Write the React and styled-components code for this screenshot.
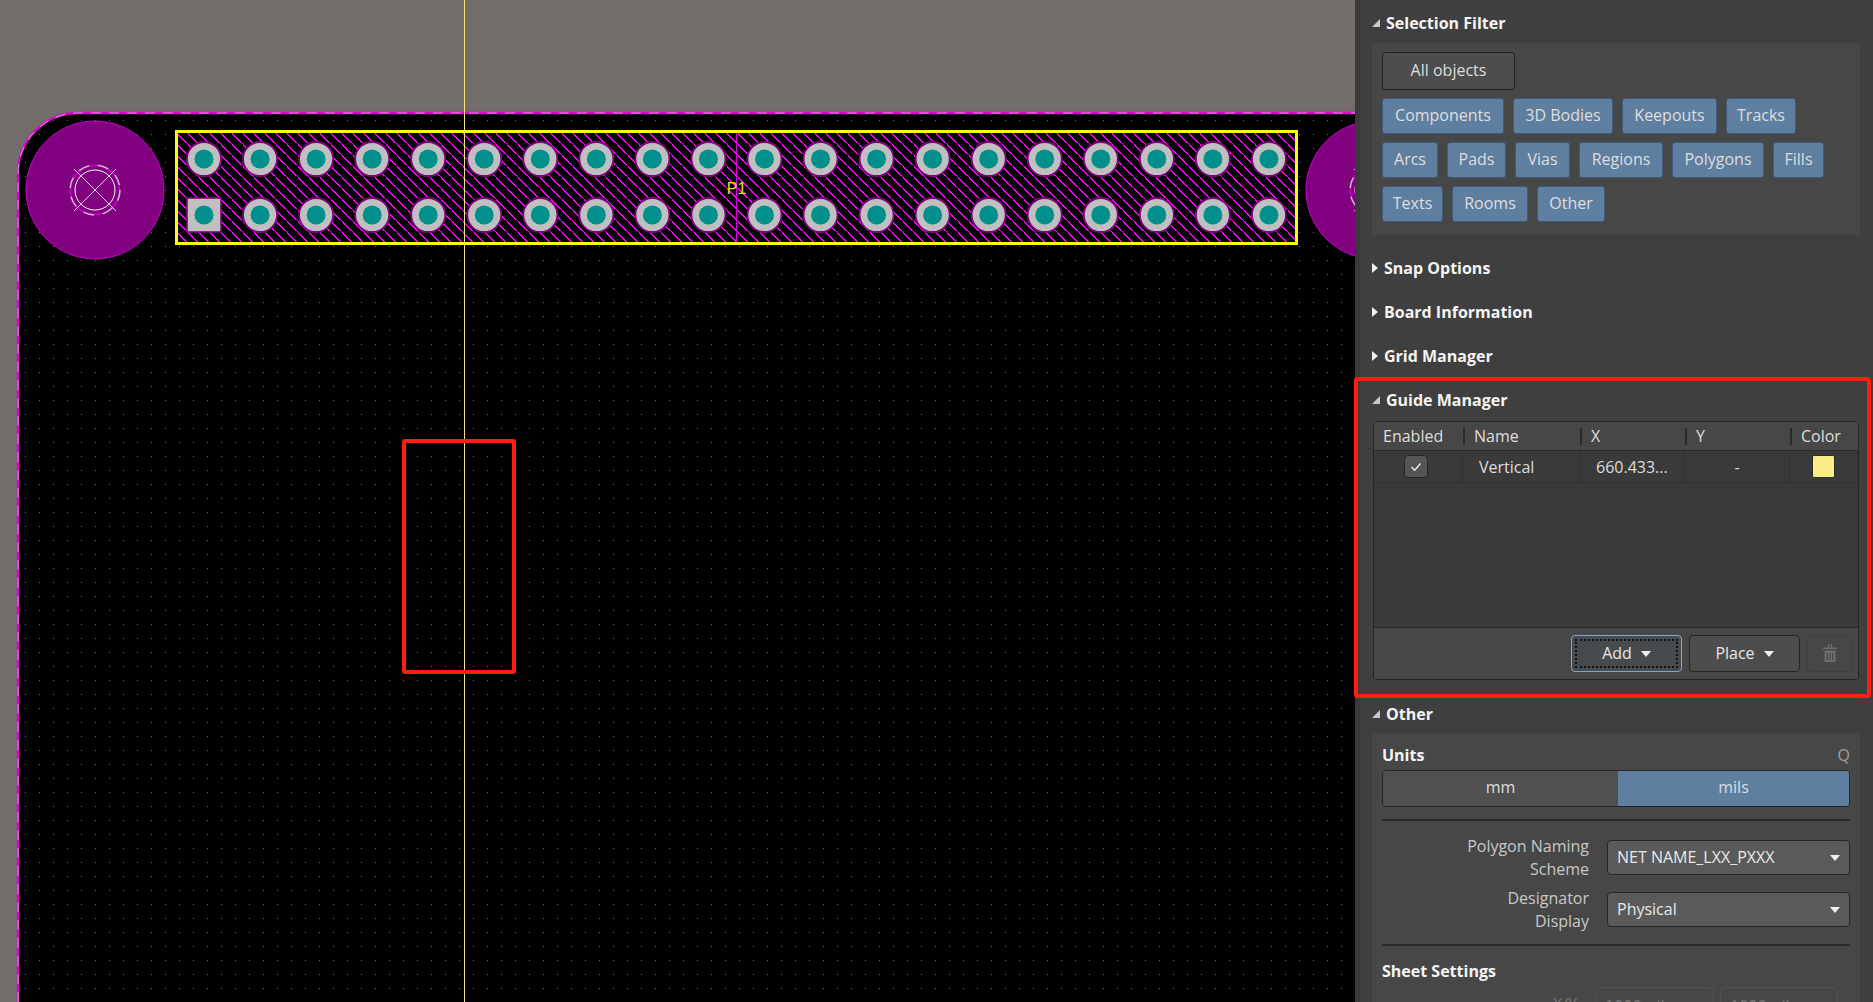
import React from "react";
import styled, { createGlobalStyle } from "styled-components";

const FONT = `"Open Sans", "Noto Sans", "Liberation Sans", sans-serif`;

const chipRows = [
  [["Components", 122], ["3D Bodies", 100], ["Keepouts", 95], ["Tracks", 70]],
  [["Arcs", 56], ["Pads", 59], ["Vias", 55], ["Regions", 84], ["Polygons", 92], ["Fills", 51]],
  [["Texts", 61], ["Rooms", 76], ["Other", 68]],
];

const padXs = Array.from({ length: 20 }, (_, i) => 204 + i * 56.05);

const MountingHole = ({ cx, cy }) => (
  <g>
    <circle cx={cx} cy={cy} r="69" fill="#800080" stroke="#d000d0" strokeWidth="1" />
    <circle cx={cx} cy={cy} r="24.5" fill="none" stroke="#d000d0" strokeWidth="1.5" />
    <circle cx={cx} cy={cy} r="25" fill="none" stroke="#c0c0c0" strokeWidth="1.5" strokeDasharray="11 9" />
    <circle cx={cx} cy={cy} r="20" fill="none" stroke="#fff" strokeWidth="1" />
    <path d={`M${cx - 21} ${cy - 21}L${cx + 21} ${cy + 21}M${cx + 21} ${cy - 21}L${cx - 21} ${cy + 21}`} stroke="#fff" strokeWidth="0.8" />
  </g>
);

const Pad = ({ x, y, square }) => (
  <g>
    {square ? (
      <rect x={x - 17} y={y - 17} width="34" height="34" fill="#c0c0c0" stroke="#800080" strokeWidth="1.6" />
    ) : (
      <circle cx={x} cy={y} r="17" fill="#c0c0c0" stroke="#800080" strokeWidth="1.8" />
    )}
    <circle cx={x} cy={y} r="9.5" fill="#008f8a" />
  </g>
);

const BoardDrawing = () => (
  <BoardSvg width="1355" height="1002" viewBox="0 0 1355 1002">
    <defs>
      <pattern id="grid" width="14" height="14" patternUnits="userSpaceOnUse" x="25" y="120">
        <rect width="1" height="1" fill="#6c6c6c" />
      </pattern>
      <pattern id="hatch" width="11" height="11" patternUnits="userSpaceOnUse">
        <path d="M-1 -1L12 12M-6.5 4.5L6.5 17.5M4.5 -6.5L17.5 6.5" stroke="#ff00ff" strokeWidth="1.4" shapeRendering="crispEdges" />
      </pattern>
    </defs>
    <path d="M18 1002V173A60 60 0 0 1 78 113H1355V1002Z" fill="#000" />
    <path d="M18 1002V173A60 60 0 0 1 78 113H1355V1002Z" fill="url(#grid)" />
    <path d="M18 1002V173A60 60 0 0 1 78 113H1355" fill="none" stroke="#e000d0" strokeWidth="2.4" />
    <path d="M18 1002V173A60 60 0 0 1 78 113H1355" fill="none" stroke="#d8a0d8" strokeWidth="1" strokeDasharray="10 8" />
    <MountingHole cx={95} cy={190} />
    <MountingHole cx={1375} cy={190} />
    <rect x="176.5" y="131.5" width="1120" height="112" fill="#000" />
    <rect x="176.5" y="131.5" width="1120" height="112" fill="url(#hatch)" />
    <path d="M736.5 131V243" stroke="#e000e0" strokeWidth="1" />
    {padXs.map((x) => (
      <Pad key={`t${x}`} x={x} y={159} />
    ))}
    {padXs.map((x, i) => (
      <Pad key={`b${x}`} x={x} y={215} square={i === 0} />
    ))}
    <rect x="176.5" y="131.5" width="1120" height="112" fill="none" stroke="#ffff00" strokeWidth="3" />
    <text x="736.5" y="194" textAnchor="middle" fontFamily="Liberation Sans, sans-serif" fontSize="16" fill="#e6e600">P1</text>
    <path d="M464.5 0V1002" stroke="#f5e77e" strokeWidth="1" />
  </BoardSvg>
);

const TrashIcon = () => (
  <svg width="14" height="19" viewBox="0 0 14 19">
    <path d="M0 3.5H14V5H0ZM5 0.5H9V3.5H8V1.5H6V3.5H5Z" fill="#6f6f6f" />
    <path d="M1.5 6.5H12.5V18H1.5Z" fill="#6f6f6f" />
    <path d="M4.3 9V16M7 9V16M9.7 9V16" stroke="#3f3f3f" strokeWidth="1" />
  </svg>
);

const App = () => {
  return (
    <Screen>
      <GlobalStyle />
      <Canvas>
        <BoardDrawing />
        <CanvasMarker />
      </Canvas>
      <Panel>
        <Section>
          <SectionHeader>
            <OpenArrow />
            Selection Filter
          </SectionHeader>
          <FilterCard>
            <AllObjects>All objects</AllObjects>
            {chipRows.map((row) => (
              <ChipRow key={row[0][0]}>
                {row.map(([label, width]) => (
                  <Chip key={label} $width={width}>
                    {label}
                  </Chip>
                ))}
              </ChipRow>
            ))}
          </FilterCard>
        </Section>

        <SectionHeader>
          <ClosedArrow />
          Snap Options
        </SectionHeader>
        <SectionHeader>
          <ClosedArrow />
          Board Information
        </SectionHeader>
        <SectionHeader>
          <ClosedArrow />
          Grid Manager
        </SectionHeader>

        <GuideSection>
          <SectionHeader>
            <OpenArrow />
            Guide Manager
          </SectionHeader>
          <GuideTable>
            <TableHead>
              <HeadCell>Enabled</HeadCell>
              <HeadCell $divider>Name</HeadCell>
              <HeadCell $divider>X</HeadCell>
              <HeadCell $divider>Y</HeadCell>
              <HeadCell $divider>Color</HeadCell>
            </TableHead>
            <TableRow>
              <BodyCell $center>
                <CheckBox>
                  <svg width="12" height="10" viewBox="0 0 12 10">
                    <path d="M1.5 5L4.7 8.2L10.5 1.5" fill="none" stroke="#f0f0f0" strokeWidth="1.3" />
                  </svg>
                </CheckBox>
              </BodyCell>
              <BodyCell $inset={16}>Vertical</BodyCell>
              <BodyCell $inset={16}>660.433...</BodyCell>
              <BodyCell $center>-</BodyCell>
              <BodyCell $center>
                <Swatch />
              </BodyCell>
            </TableRow>
            <TableEmpty />
            <TableFooter>
              <FocusButton>
                <ButtonLabel>Add</ButtonLabel>
                <DropArrow />
              </FocusButton>
              <FooterButton>
                <ButtonLabel>Place</ButtonLabel>
                <DropArrow />
              </FooterButton>
              <TrashButton>
                <TrashIcon />
              </TrashButton>
            </TableFooter>
          </GuideTable>
          <GuideMarker />
        </GuideSection>

        <Section>
          <SectionHeader>
            <OpenArrow />
            Other
          </SectionHeader>
          <OtherCard>
            <UnitsRow>
              <GroupTitle>Units</GroupTitle>
              <Hotkey>Q</Hotkey>
            </UnitsRow>
            <UnitsToggle>
              <UnitOption>mm</UnitOption>
              <UnitOption $active>mils</UnitOption>
            </UnitsToggle>
            <Divider $top={12} $bottom={19} />
            <FieldRow>
              <FieldLabel>
                Polygon Naming
                <br />
                Scheme
              </FieldLabel>
              <Select>
                NET NAME_LXX_PXXX
                <DropArrow />
              </Select>
            </FieldRow>
            <FieldRow>
              <FieldLabel>
                Designator
                <br />
                Display
              </FieldLabel>
              <Select>
                Physical
                <DropArrow />
              </Select>
            </FieldRow>
            <Divider $top={0} $bottom={0} />
            <SheetTitle>Sheet Settings</SheetTitle>
            <SheetRow>
              <SheetLabel>X/Y</SheetLabel>
              <SheetInput>1000mil</SheetInput>
              <SheetInput>1000mil</SheetInput>
            </SheetRow>
          </OtherCard>
        </Section>
      </Panel>
    </Screen>
  );
};
export default App;

const GlobalStyle = createGlobalStyle`
  html, body {
    margin: 0;
    padding: 0;
    background: #3f3f3f;
  }
  * {
    box-sizing: border-box;
  }
`;

const Screen = styled.div`
  width: 1873px;
  height: 1002px;
  overflow: hidden;
  display: grid;
  grid-template-columns: 1355px 518px;
  font-family: ${FONT};
  font-size: 16px;
  color: #dedede;
`;
const Canvas = styled.div`
  position: relative;
  height: 1002px;
  overflow: hidden;
  background-color: #716d6b;
`;
const BoardSvg = styled.svg`
  display: block;
`;
const CanvasMarker = styled.div`
  position: absolute;
  left: 402px;
  top: 439px;
  width: 114px;
  height: 235px;
  border: 4px solid #ff1e12;
  border-radius: 3px;
`;
const Panel = styled.div`
  height: 1002px;
  padding: 1px 0 0 12px;
  background-color: #3f3f3f;
  border-left: 5px solid #3a3a3a;
`;
const Section = styled.div`
  display: flex;
  flex-direction: column;
`;
const GuideSection = styled(Section)`
  position: relative;
`;
const GuideMarker = styled.div`
  position: absolute;
  left: -18px;
  top: -1px;
  width: 517px;
  height: 321px;
  border: 4.5px solid #ff1e12;
  border-radius: 3px;
`;
const SectionHeader = styled.div`
  height: 44px;
  display: flex;
  align-items: center;
  gap: 6px;
  font-size: 16px;
  font-weight: 700;
  color: #f4f4f4;
`;
const OpenArrow = styled.span`
  width: 0;
  height: 0;
  border-left: 8px solid transparent;
  border-bottom: 8px solid #c8c8c8;
`;
const ClosedArrow = styled.span`
  width: 0;
  height: 0;
  border-top: 5px solid transparent;
  border-bottom: 5px solid transparent;
  border-left: 6px solid #f0f0f0;
`;
const FilterCard = styled.div`
  width: 488px;
  height: 192px;
  margin: -2px 0 11px;
  padding: 9px 10px;
  background-color: #474747;
  border-radius: 3px;
`;
const AllObjects = styled.div`
  width: 133px;
  height: 38px;
  margin-bottom: 8px;
  padding-bottom: 2px;
  display: flex;
  align-items: center;
  justify-content: center;
  background-color: #4d4d4d;
  border: 1px solid #222;
  border-radius: 3px;
`;
const ChipRow = styled.div`
  display: flex;
  gap: 9px;
  margin-bottom: 8px;
`;
const Chip = styled.div`
  width: ${(p) => p.$width}px;
  height: 36px;
  padding-bottom: 2px;
  display: flex;
  align-items: center;
  justify-content: center;
  background-color: #5f7fa0;
  border: 1px solid #3e5a78;
  border-radius: 3px;
  white-space: nowrap;
`;
const GuideTable = styled.div`
  width: 486px;
  height: 259px;
  margin: -1px 0 12px 1px;
  display: flex;
  flex-direction: column;
  background-color: #3a3a3a;
  border: 1px solid #262626;
  border-radius: 3px;
`;
const TableHead = styled.div`
  height: 29px;
  display: grid;
  grid-template-columns: 89px 117px 105px 105px 1fr;
  align-items: center;
  background-color: #474747;
  border-bottom: 1px solid #2c2c2c;
`;
const HeadCell = styled.div`
  height: 17px;
  display: flex;
  align-items: center;
  padding-left: 9px;
  padding-bottom: 1px;
  border-left: ${(p) => (p.$divider ? "2px solid #2a2a2a" : "none")};
`;
const TableRow = styled.div`
  height: 32px;
  display: grid;
  grid-template-columns: 89px 117px 105px 105px 1fr;
  border-bottom: 1px solid #333;
`;
const BodyCell = styled.div`
  display: flex;
  align-items: center;
  justify-content: ${(p) => (p.$center ? "center" : "flex-start")};
  padding-left: ${(p) => p.$inset || 0}px;
  border-right: 1px solid #333;
`;
const CheckBox = styled.div`
  width: 24px;
  height: 23px;
  margin-right: 5px;
  display: flex;
  align-items: center;
  justify-content: center;
  background-color: #555;
  border: 1px solid #262626;
  border-radius: 4px;
`;
const Swatch = styled.div`
  width: 23px;
  height: 23px;
  background-color: #fbed87;
  border: 1px solid #2c2c2c;
  border-radius: 2px;
`;
const TableEmpty = styled.div`
  flex: 1;
`;
const TableFooter = styled.div`
  height: 52px;
  display: flex;
  align-items: center;
  justify-content: flex-end;
  gap: 7px;
  padding-right: 6px;
  background-color: #474747;
  border-top: 1px solid #262626;
`;
const FooterButton = styled.div`
  width: 111px;
  height: 37px;
  padding-bottom: 1px;
  display: flex;
  align-items: center;
  justify-content: center;
  gap: 9px;
  background-color: #4d4d4d;
  border: 1px solid #262626;
  border-radius: 4px;
`;
const FocusButton = styled(FooterButton)`
  position: relative;
  background-color: #474a4e;
  border-color: #7fa8d0;
  &::after {
    content: "";
    position: absolute;
    inset: 3px;
    border: 2px dotted #111;
  }
`;
const TrashButton = styled.div`
  width: 45px;
  height: 37px;
  display: flex;
  align-items: center;
  justify-content: center;
  background-color: #474747;
  border: 1px solid #404040;
  border-radius: 4px;
`;
const ButtonLabel = styled.span`
  color: #e8e8e8;
`;
const DropArrow = styled.span`
  width: 0;
  height: 0;
  margin-top: 2px;
  border-left: 5.5px solid transparent;
  border-right: 5.5px solid transparent;
  border-top: 6px solid #f0f0f0;
`;
const OtherCard = styled.div`
  width: 488px;
  height: 300px;
  margin-top: -2px;
  padding: 0 10px;
  background-color: #474747;
  border-radius: 3px;
`;
const UnitsRow = styled.div`
  height: 36px;
  padding-top: 5px;
  display: flex;
  align-items: center;
  justify-content: space-between;
`;
const GroupTitle = styled.div`
  font-size: 16px;
  font-weight: 700;
  color: #f4f4f4;
`;
const Hotkey = styled.div`
  font-size: 16px;
  color: #a0a0a0;
`;
const UnitsToggle = styled.div`
  height: 37px;
  display: grid;
  grid-template-columns: 235px 1fr;
  overflow: hidden;
  border: 1px solid #262626;
  border-radius: 4px;
`;
const UnitOption = styled.div`
  padding-bottom: 3px;
  display: flex;
  align-items: center;
  justify-content: center;
  background-color: ${(p) => (p.$active ? "#5f7fa0" : "#505050")};
`;
const Divider = styled.div`
  height: 2px;
  margin: ${(p) => p.$top}px 0 ${(p) => p.$bottom}px;
  background-color: #2b2b2b;
`;
const FieldRow = styled.div`
  height: 35px;
  margin-bottom: 17px;
  display: grid;
  grid-template-columns: 207px 243px;
  grid-template-rows: 35px;
  column-gap: 18px;
  align-items: center;
`;
const FieldLabel = styled.div`
  text-align: right;
  line-height: 23px;
  color: #c8c8c8;
`;
const Select = styled.div`
  height: 35px;
  display: flex;
  align-items: center;
  justify-content: space-between;
  padding: 0 9px 2px;
  background-color: #5a5a5a;
  border: 1px solid #262626;
  border-radius: 4px;
  color: #e8e8e8;
  white-space: nowrap;
`;
const SheetTitle = styled.div`
  margin-top: 14px;
  font-size: 16px;
  font-weight: 700;
  color: #f4f4f4;
`;
const SheetRow = styled.div`
  margin-top: 5px;
  display: grid;
  grid-template-columns: 207px 119px 118px;
  column-gap: 6px;
  color: #777;
`;
const SheetLabel = styled.div`
  text-align: right;
  padding: 6px 12px 0 0;
`;
const SheetInput = styled.div`
  height: 35px;
  padding: 7px 9px;
  border: 1px solid #525252;
  border-radius: 4px;
`;
